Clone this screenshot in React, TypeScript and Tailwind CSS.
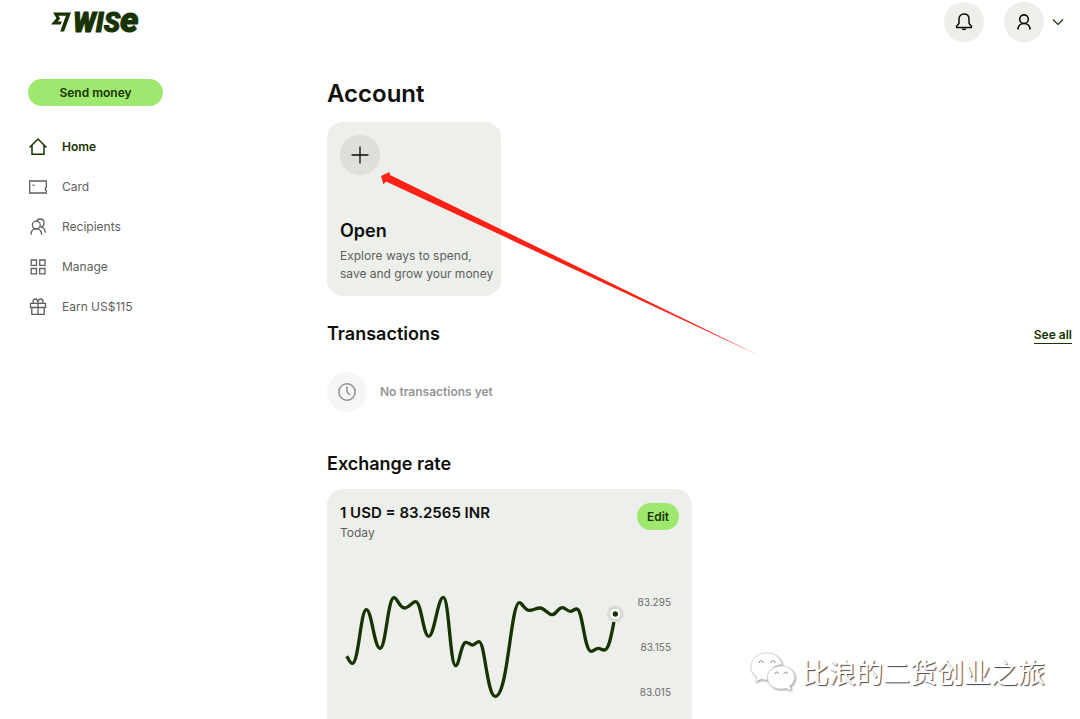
import type { ReactNode } from "react";

interface NavItem {
  label: string;
  icon: ReactNode;
  active?: boolean;
}

const iconProps = {
  viewBox: "0 0 20 20",
  fill: "none",
  stroke: "currentColor",
  className: "size-5 shrink-0",
  "aria-hidden": true,
};

const navItems: NavItem[] = [
  {
    label: "Home",
    active: true,
    icon: (
      <svg {...iconProps} strokeWidth="1.5">
        <path d="M1.500 10.500 10 2l8.500 8.500M4 8.500V17.300h12V8.500" />
      </svg>
    ),
  },
  {
    label: "Card",
    icon: (
      <svg {...iconProps} strokeWidth="1.3">
        <path d="M18.300 4H1.700v12h16.600v-2.500c-1.400-.6-1.600-2.600 0-3.200V4Z" />
        <path d="M4.500 8.200h2" />
      </svg>
    ),
  },
  {
    label: "Recipients",
    icon: (
      <svg {...iconProps} strokeWidth="1.3">
        <circle cx="8.300" cy="8" r="3.900" />
        <path d="M3 17.800c0-3.600 2.200-5.900 5.300-5.900s5.300 2.300 5.300 5.900" />
        <path d="M8.600 4C9.200 2.700 10.500 2 12 2c2.300 0 4 1.700 4 4 0 2.200-1.600 3.900-3.700 3.900M13 10.200c2.600.4 4.200 2.500 4.300 5.600" />
      </svg>
    ),
  },
  {
    label: "Manage",
    icon: (
      <svg {...iconProps} strokeWidth="1.3">
        <path d="M3.200 3h5.300v5.300H3.200zM11.700 3H17v5.300h-5.300zM3.200 11.500h5.300v5.300H3.200zM11.700 11.500H17v5.300h-5.300z" />
      </svg>
    ),
  },
  {
    label: "Earn US$115",
    icon: (
      <svg {...iconProps} strokeWidth="1.3">
        <path d="M2.500 6.300h15v4.200h-15zM3.800 10.500v6.800h12.400v-6.800M10 6.300v11" />
        <path d="M10 6.300C10 3.500 8.900 2 7.400 2 6 2 5 3 5 4.300c0 .8.200 1.500.7 2M10 6.300C10 3.500 11.100 2 12.600 2 14 2 15 3 15 4.300c0 .8-.2 1.500-.7 2" />
      </svg>
    ),
  },
];

const rates = ["83.295", "83.155", "83.015"];

function Logo() {
  return (
    <a href="#" aria-label="Wise" className="flex h-5 items-end gap-0.5 text-[#163300]">
      <svg viewBox="0 0 24 24" className="h-5 w-5" fill="currentColor" aria-hidden="true">
        <path d="M6.488 7.469 0 15.050h11.585l1.301-3.576H7.922l3.033-3.507.01-.092L8.993 4.480h8.873l-6.878 18.925h4.706L24 .595H2.543l3.945 6.874Z" />
      </svg>
      <span className="flex items-baseline font-[Roboto] text-[27px] leading-[18px] font-black italic [-webkit-text-stroke:1px_#163300]">
        WIS<span className="text-[35px] leading-[18px]">e</span>
      </span>
    </a>
  );
}

function Header() {
  return (
    <header className="flex h-11 items-center justify-between pr-4 pl-[51px]">
      <Logo />
      <div className="flex items-center">
        <button aria-label="Notifications" className="mr-5 flex size-10 items-center justify-center rounded-full bg-[#edefeb] text-[#0e0f0c]">
          <svg viewBox="0 0 20 20" className="size-5" fill="none" stroke="currentColor" strokeWidth="1.5" aria-hidden="true">
            <path d="M10 2C6.900 2 5 4.100 5 7v4.500L2.700 14v1.500h14.600V14L15 11.500V7c0-2.900-1.900-5-5-5Z" />
            <path d="M8.300 16.500c.3 1.200 3.100 1.200 3.400 0" />
          </svg>
        </button>
        <button aria-label="Profile" className="flex items-center gap-2 text-[#163300]">
          <span className="flex size-10 items-center justify-center rounded-full bg-[#edefeb] text-[#0e0f0c]">
            <svg viewBox="0 0 20 20" className="size-5" fill="none" stroke="currentColor" strokeWidth="1.600" aria-hidden="true">
              <circle cx="10" cy="7.200" r="4.300" />
              <path d="M4 17.500c0-3.600 2.500-6 6-6s6 2.400 6 6" />
            </svg>
          </span>
          <svg viewBox="0 0 12 12" className="size-3" fill="none" stroke="currentColor" strokeWidth="1.200" aria-hidden="true">
            <path d="m1 3.500 5 5 5-5" />
          </svg>
        </button>
      </div>
    </header>
  );
}

function Sidebar() {
  return (
    <aside className="w-[135px] shrink-0 pt-[35px]">
      <button className="block h-[27px] w-full rounded-full bg-[#9fe870] text-[12px] font-semibold text-[#163300]">
        Send money
      </button>
      <nav className="mt-[21px]">
        {navItems.map((item) => (
          <a
            key={item.label}
            href="#"
            className={
              item.active
                ? "flex h-10 items-center gap-3.5 text-[12px] font-semibold text-[#163300]"
                : "flex h-10 items-center gap-3.5 text-[12px] text-[#5d5f5d]"
            }
          >
            {item.icon}
            {item.label}
          </a>
        ))}
      </nav>
    </aside>
  );
}

function RateChart() {
  return (
    <div className="mt-12 flex items-start justify-between">
      <svg viewBox="60 330 870 330" className="h-[110px] w-[290px] shrink-0" fill="none" role="img" aria-label="USD to INR today">
        <path
          stroke="#163300"
          strokeWidth="10"
          strokeLinejoin="round"
          d="M80 526C86 534 90 547 97 547C116 547 122 386 139 386C155 386 163 502 180 502C198 502 203 350 222 350C232 350 238 381 254 381C267 381 276 362 287 362C304 362 310 466 326 466C343 466 353 349 370 349C387 349 390 554 407 554C418 554 423 484 438 484C446 484 450 492 458 492C465 492 470 482 477 482C495 482 501 646 526 646C564 646 572 365 598 365C608 365 613 388 628 388C639 388 648 381 660 381C674 381 684 401 697 401C708 401 714 380 727 380C736 380 742 391 751 391C758 391 762 384 770 384C789 384 792 511 814 511C822 511 826 502 835 502C842 502 846 507 853 507C869 507 878 440 886 400"
        />
        <circle cx="886" cy="399" r="25" fill="#d9dcd5" />
        <circle cx="886" cy="399" r="15" fill="#fff" />
        <circle cx="886" cy="399" r="8" fill="#163300" />
      </svg>
      <ul className="flex flex-col gap-[29px] pt-[3px] pr-2 text-right text-[10px] leading-4 text-[#6a6c6a]">
        {rates.map((rate) => (
          <li key={rate}>{rate}</li>
        ))}
      </ul>
    </div>
  );
}

export default function App() {
  return (
    <div className="relative min-h-screen overflow-hidden bg-white font-[Inter,sans-serif] text-[#0e0f0c]">
      <Header />

      <div className="flex pr-2 pl-7">
        <Sidebar />

        <main className="ml-[164px] min-w-0 flex-1 pt-[33px]">
          {/* Account */}
          <section>
            <h1 className="text-[24px] leading-[34px] font-semibold">Account</h1>
            <button className="mt-[11px] flex h-[174px] w-[174px] flex-col items-start rounded-2xl bg-[#edefeb] p-[13px] text-left">
              <span className="flex size-10 items-center justify-center rounded-full bg-[#dde0d9]">
                <svg viewBox="0 0 20 20" className="size-5" stroke="#0e0f0c" strokeWidth="1.300" aria-hidden="true">
                  <path d="M10 1.500v17M1.500 10h17" />
                </svg>
              </span>
              <span className="mt-auto text-[18px] leading-6 font-semibold">Open</span>
              <span className="mt-1 text-[12px] leading-[18px] whitespace-nowrap text-[#5d5f5d]">
                Explore ways to spend,
                <br />
                save and grow your money
              </span>
            </button>
          </section>

          {/* Transactions */}
          <section className="mt-6">
            <div className="flex items-end justify-between">
              <h2 className="text-[18px] leading-7 font-semibold">Transactions</h2>
              <a href="#" className="mb-1 border-b border-[#163300] text-[12px] leading-4 font-semibold text-[#163300]">
                See all
              </a>
            </div>
            <div className="mt-6 flex items-center gap-[13px]">
              <span className="flex size-10 items-center justify-center rounded-full bg-[#f6f7f5] text-[#8f918f]">
                <svg viewBox="0 0 20 20" className="size-5" fill="none" stroke="currentColor" strokeWidth="1.500" aria-hidden="true">
                  <circle cx="10" cy="10" r="8.200" />
                  <path d="M10 4.500V10l3 3" />
                </svg>
              </span>
              <p className="text-[12px] font-semibold text-[#949694]">No transactions yet</p>
            </div>
          </section>

          {/* Exchange rate */}
          <section className="mt-[38px]">
            <h2 className="text-[18px] leading-7 font-semibold">Exchange rate</h2>
            <div className="mt-[11px] max-w-[365px] rounded-t-2xl bg-[#edefeb] px-[13px] pt-3.5 pb-5">
              <div className="flex items-start justify-between">
                <div>
                  <h3 className="text-[15px] leading-5 font-semibold">1 USD = 83.2565 INR</h3>
                  <p className="text-[12px] leading-5 text-[#5d5f5d]">Today</p>
                </div>
                <button className="h-[27px] w-[42px] rounded-full bg-[#9fe870] text-[12px] font-semibold text-[#163300]">
                  Edit
                </button>
              </div>
              <RateChart />
            </div>
          </section>
        </main>
      </div>

      {/* pointer to the open button */}
      <svg
        viewBox="0 0 377 183"
        className="pointer-events-none absolute top-[172px] left-[381px] w-[377px]"
        fill="#ff2116"
        aria-hidden="true"
      >
        <path d="M0 4 8.500 0 9 3 377 183 5 9.500 2.500 12.500Z" />
      </svg>

      {/* channel signature */}
      <div className="pointer-events-none absolute right-[35px] bottom-[29px] flex items-center gap-1.5 text-white">
        <svg viewBox="0 0 46 40" className="h-10 w-[46px] drop-shadow-[1px_1px_1px_#999]" aria-hidden="true">
          <g fill="currentColor" stroke="#ccc" strokeWidth="0.6">
            <path d="M17 1C8 1 1 7 1 14.500c0 4.500 2.300 8 6 10.500l-1.500 5 5.500-3c2 .6 4 1 6.200 1C17 19 23 13 32 12.500 30.500 6 24.500 1 17 1Z" />
            <path d="M31 14c-7.500 0-13.500 5-13.500 11.500S23.500 37 31 37c1.800 0 3.500-.3 5-.8l5 2.300-1.300-4.200c3-2.200 4.800-5.200 4.800-8.800C44.500 19 38.500 14 31 14Z" />
          </g>
          <g fill="none" stroke="#888" strokeWidth="1">
            <path d="M9 11c0-3 4-3 4 0M21 11c0-3 4-3 4 0M25 22c0-2.500 3.500-2.500 3.500 0M34 22c0-2.500 3.500-2.500 3.500 0" />
          </g>
        </svg>
        <p className="font-['Noto_Sans_CJK_SC',sans-serif] text-[27px] leading-10 whitespace-nowrap [text-shadow:1px_1px_1px_#444]">
          比浪的二货创业之旅
        </p>
      </div>
    </div>
  );
}
